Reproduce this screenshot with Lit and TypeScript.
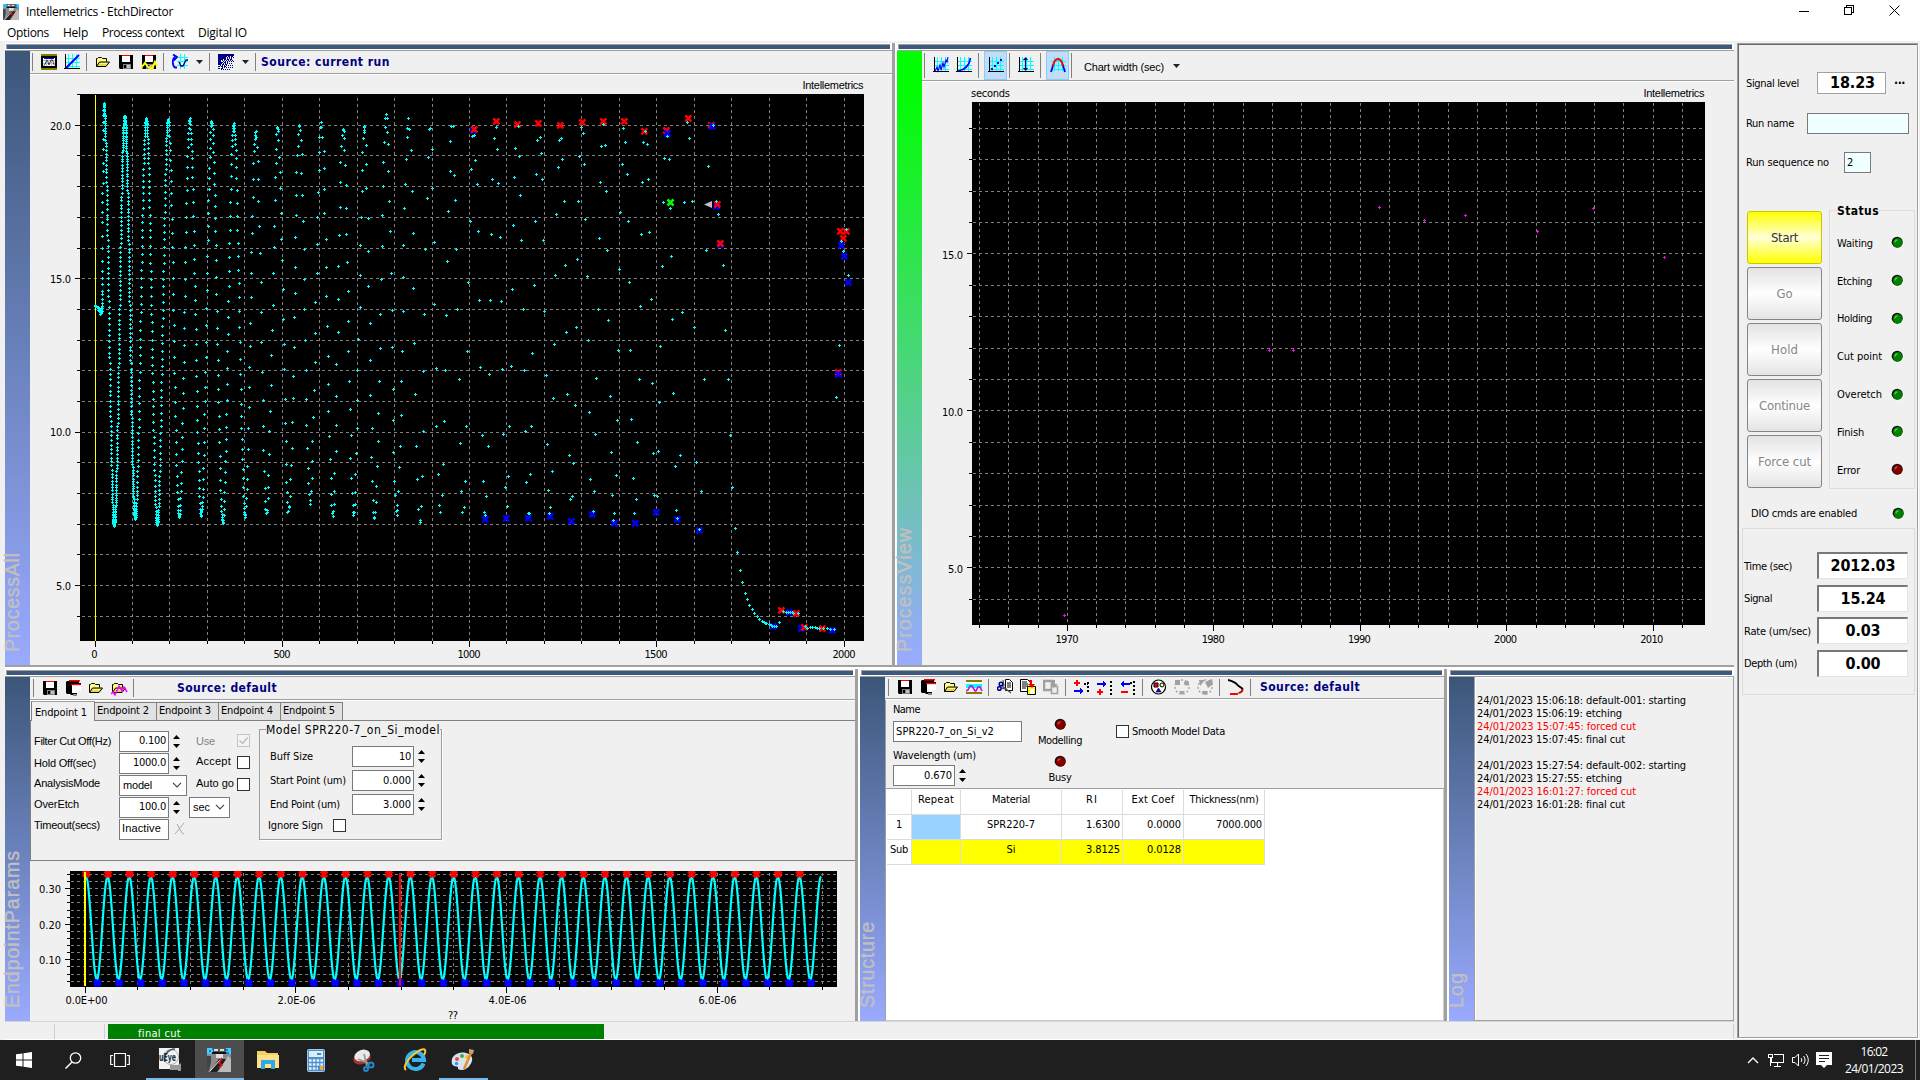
import { LitElement, html, svg, css } from "lit";
import { customElement } from "lit/decorators.js";

/* ---------- helpers ---------- */
const t = (s: string, w: number, cls = "") => html`<span class="t ${cls}" data-w=${w}>${s}</span>`;

const plus = (pts: number[][]) =>
  pts.map(([x, y]) => `M${Math.floor(x) - 1} ${Math.floor(y) + 0.5}h3M${Math.floor(x) + 0.5} ${Math.floor(y) - 1}v3`).join("");
const cross = (pts: number[][], r = 3) =>
  pts.map(([x, y]) => `M${x - r} ${y - r}l${2 * r} ${2 * r}m0 ${-2 * r}l${-2 * r} ${2 * r}`).join("");
/* coordinates stored in thirds of a pixel, relative to an origin */
const thirds = (a: number[], ox: number, oy: number) => {
  const r: number[][] = [];
  for (let i = 0; i < a.length; i += 2) r.push([ox + a[i] / 3, oy + a[i + 1] / 3]);
  return r;
};

/* ---------- signal trace ---------- */
const peaks = [[104, 104], [125, 117], [146.5, 119], [168.5, 120], [190, 120], [212, 123], [234, 123], [256, 132], [278, 125], [300, 126], [321.5, 124], [343, 129], [364.5, 128], [386.5, 117], [408.5, 118], [430, 125], [452.5, 126]];
const dips = [[114.5, 526], [135.5, 519], [157.5, 525], [179.5, 517], [201.5, 515], [223, 523], [245.5, 515], [267, 513], [289, 512], [310.5, 502], [333, 514], [354, 515], [375, 519], [397, 515], [420, 521], [440.5, 517]];
const fall = [0.09, 0.075, 0.15, 0.28, 0.28, 0.28, 0.28, 0.55, 0.5, 0.55, 0.55, 0.55, 0.62, 0.66, 1, 1.1];
const rise = [0.08, 0.15, 0.14, 0.28, 0.28, 0.28, 0.4, 0.5, 0.5, 0.55, 0.55, 0.55, 0.62, 0.66, 1, 1.1];
const trace: number[][] = [];
for (let i = 0; i < 14; i++) trace.push([95 + i * 0.3, 305.5 + i * 0.22]);
for (const [x, y] of [[98, 308], [98, 310], [99, 309], [99, 311], [100, 310], [100, 312], [100, 314], [101, 312], [101, 313], [101, 308], [102, 311], [102, 308]]) trace.push([x, y]);
for (const y of [306, 303, 299, 294, 291, 284, 278, 271, 261, 248, 236, 222, 212, 202, 193, 183, 171, 163, 149, 139, 130, 122, 115, 110]) trace.push([102.3 + (303 - y) / 160, y]);
for (let k = 0; k < dips.length; k++) {
  const seg = [[peaks[k], dips[k], fall[k]], [dips[k], peaks[k + 1], rise[k]]] as [number[], number[], number][];
  for (const [a, b, s] of seg) {
    for (let x = a[0] + ((k * 0.37) % 1) * s; x < b[0]; x += s) {
      if (x > 450) break;
      const f = (1 - Math.cos((Math.PI * (x - a[0])) / (b[0] - a[0]))) / 2;
      const n = k > 3 ? Math.sin(x * 91.7) * 2.5 : 0.4 * Math.sin(x * 50);
      trace.push([x + (k > 6 ? Math.sin(x * 37) * 0.5 : 0), a[1] + (b[1] - a[1]) * f + n]);
    }
  }
}
const upper = thirds([
  4,379,10,379,1,424,67,409,73,406,76,481,64,508,13,526,82,553,16,601,61,664,85,694,19,748,55,847,88,901,121,901,154,904,22,928,
  139,382,133,415,142,448,127,538,145,550,124,703,151,712,196,445,208,469,193,532,211,586,190,676,214,721,187,868,220,928,204,379,
  271,412,262,421,274,460,259,523,277,538,256,664,280,721,253,856,283,934,334,415,328,421,337,478,325,502,343,604,319,643,346,796,316,826,349,997,
  394,382,400,400,388,469,403,493,385,604,406,658,382,778,412,829,379,982,415,1020,460,373,454,439,466,436,451,547,469,574,448,715,472,751,445,928,475,961,
  520,385,526,427,517,493,532,523,511,637,535,664,508,808,538,847,586,394,580,427,592,433,595,538,577,547,598,697,574,703,604,898,571,919,
  652,409,643,475,658,478,640,607,661,625,664,769,637,799,667,958,697,937,733,982,712,367,718,415,703,607,727,604,769,751,790,376,775,499,799,604,805,643,820,796,826,991,
  1189,688,1174,724,1180,754,1195,826], 450, 0);
const lower = thirds([
  52,34,28,118,49,259,31,310,46,424,34,454,43,502,37,517,91,82,118,103,97,286,115,319,100,424,109,469,103,517,106,526,157,88,184,79,178,259,160,283,175,409,166,442,172,499,
  247,40,223,91,244,259,226,274,241,403,229,427,235,520,238,520,313,13,289,106,310,175,292,313,307,394,295,451,301,502,298,520,352,163,376,196,358,346,370,370,367,469,361,478,
  415,2,439,115,418,217,436,283,421,418,433,454,430,514,505,31,481,169,502,241,484,337,499,406,487,466,493,520,490,541,541,31,568,118,544,238,562,307,550,415,559,478,553,520,
  631,19,607,130,628,187,610,340,625,334,613,466,622,469,670,160,691,346,676,379,679,511,682,535,763,118,739,367,754,454,748,568,835,118,841,286,847,442,856,565,862,637,871,691,
  877,727,886,760,892,778,898,796,907,808,913,820,922,829,928,838,937,844,942,847,946,849,950,851,957,853,963,856,968,859,973,859,979,859,988,847,1000,814,1009,817,1015,818,1021,818,1026,818,1031,820,1045,820,
  1066,860,1072,865,1080,862,1087,862,1096,862,1102,865,1108,865,1120,866,1132,865,1142,868,1153,868,1168,16,1159,172], 450, 340);
const redA = thirds([73,388,139,364,202,374,265,370,331,376,397,367,460,364,523,364,583,394,649,391,715,355,784,376,802,613,811,730,1171,694,1189,694,1180,715], 450, 0);
const redB = thirds([1165,97,994,811,1039,820,1063,862,1117,866], 450, 340);
const blueUnder = thirds([70,391,799,619,811,734], 450, 0).concat(thirds([1018,817,970,859,1054,865], 450, 340));
const blueOver = thirds([652,400,787,379,1174,736,1183,769,1195,847], 450, 0).concat(
  thirds([106,538,169,535,235,535,301,529,364,544,427,523,493,550,556,550,619,517,682,538,748,571,1165,103,1147,871], 450, 340));

const gridPath = (xs: number[], ys: number[], x0: number, x1: number, y0: number, y1: number) =>
  xs.map(x => `M${x} ${y0}V${y1}`).join("") + ys.map(y => `M${x0} ${y}H${x1}`).join("");
const rng = (n: number, f: (i: number) => number) => Array.from({ length: n }, (_, i) => Math.floor(f(i)) + 0.5);

const label = (x: number, y: number, s: string, w: number, anchor = "end") =>
  svg`<text x=${x} y=${y} text-anchor=${anchor} textLength=${w} lengthAdjust="spacing">${s}</text>`;

function chartAll() {
  const xs = rng(20, i => 132.45 + i * 37.45);
  const ys = rng(17, i => 125.3 + i * 30.68);
  const major = (i: number) => i % 5 === 0;
  return html`<svg class="chart" width="862" height="590" viewBox="30 75 862 590">
    <text x="863.5" y="89" text-anchor="end" class="ms" textLength="61">Intellemetrics</text>
    <rect x="80" y="94" width="784" height="547" fill="#000"/>
    <g class="cr">
      <path class="grid" d=${gridPath(xs, ys, 82, 864, 98, 641)}/>
      <path class="tick" d=${"M77 94.5h3" + ys.map((y, i) => (major(i) ? `M75 ${y}h5` : `M77 ${y}h3`)).join("") + "M95.5 641v6" + xs.map((x, i) => `M${x} 641v${(i + 1) % 5 ? 3 : 6}`).join("")}/>
      <path d="M95.5 95V641" stroke="#ff0"/>
    </g>
    <path d=${cross(blueUnder)} stroke="#00f" stroke-width="2.5"/>
    <path d=${cross(redA.concat(redB))} stroke="#f00" stroke-width="2.5"/>
    <path d=${cross(blueOver)} stroke="#00f" stroke-width="2.5"/>
    <path d=${cross([[670.5, 202.5]])} stroke="#0f0" stroke-width="2.5"/>
    <path d="M704 204.5l8-3.5v7z" fill="#c0c0c0"/>
    <path class="cr" d=${plus(trace.concat(upper, lower))} stroke="#0ff"/>
    ${label(71, 130, "20.0", 21)}${label(71, 283, "15.0", 21)}${label(71, 436, "10.0", 21)}${label(71, 590, "5.0", 15)}
    ${label(94.5, 658, "0", 6, "middle")}${label(282, 658, "500", 17, "middle")}${label(469, 658, "1000", 23, "middle")}${label(656, 658, "1500", 23, "middle")}${label(844, 658, "2000", 23, "middle")}
  </svg>`;
}

function chartView() {
  const xs = rng(25, i => 979.5 + i * 29.29);
  const ys = rng(16, i => 128.3 + i * 31.4);
  const pts = [[1064, 615], [1269, 350], [1293, 350], [1379, 207], [1424, 220], [1465, 215], [1537, 231], [1593, 208], [1664, 257]];
  return html`<svg class="chart" width="812" height="583" viewBox="922 82 812 583">
    <text x="971" y="97" textLength="39">seconds</text>
    <text x="1704.5" y="97" text-anchor="end" class="ms" textLength="61">Intellemetrics</text>
    <rect x="972" y="102" width="733" height="523" fill="#000"/>
    <g class="cr">
      <path class="grid" d=${gridPath(xs, ys, 973, 1703, 103, 625)}/>
      <path class="tick" d=${ys.map((y, i) => (i % 5 === 4 ? `M967 ${y}h5` : `M969 ${y}h3`)).join("") + xs.map((x, i) => `M${x} 625v${i % 5 === 3 ? 6 : 3}`).join("")}/>
      <path d=${plus(pts)} stroke="#f0f"/>
    </g>
    ${label(963, 259, "15.0", 21)}${label(963, 416, "10.0", 21)}${label(963, 573, "5.0", 15)}
    ${[1970, 1980, 1990, 2000, 2010].map((v, i) => label(1067 + i * 146.2, 643, String(v), 23, "middle"))}
  </svg>`;
}

function chartModel() {
  const xs = rng(14, i => 137.9 + i * 52.65);
  const ys = rng(16, i => 874.4 + i * 7.12);
  let d = "";
  for (let x = 86; x <= 821.2; x += 0.5) {
    const c = Math.cos(((x - 86) / 21.62) * 2 * Math.PI);
    d += `${d ? "L" : "M"}${x} ${(928 - 51.5 * c).toFixed(1)}`;
  }
  const reds = Array.from({ length: 34 }, (_, k) => [86.3 + k * 21.62, 874]);
  const blues = Array.from({ length: 34 }, (_, k) => [97.5 + k * 21.62, 983]);
  return html`<svg class="chart" width="825" height="160" viewBox="30 861 825 160">
    <defs><clipPath id="c"><rect x="70" y="871" width="767" height="116"/></clipPath></defs>
    <rect x="70" y="871" width="767" height="116" fill="#000"/>
    <g class="cr">
      <path class="grid" d=${gridPath(xs, ys, 71, 837, 873, 987)}/>
      <path class="tick" d=${ys.map((y, i) => (i % 5 === 2 ? `M65 ${y}h5` : `M67 ${y}h3`)).join("") + "M85.5 987v6" + xs.map((x, i) => `M${x} 987v${i % 4 === 3 ? 6 : 3}`).join("")}/>
    </g>
    <g clip-path="url(#c)">
      <path d=${d} stroke="#0ff" stroke-width="2.2" fill="none"/>
      <path d=${cross(reds)} stroke="#f00" stroke-width="4"/>
      <path d=${cross(blues)} stroke="#00f" stroke-width="4"/>
      <rect x="84" y="872" width="2" height="114" fill="#ff0"/>
      <rect x="399" y="873" width="2" height="113" fill="#f00"/>
    </g>
    ${label(61, 893, "0.30", 22)}${label(61, 929, "0.20", 22)}${label(61, 964, "0.10", 22)}
    ${label(86.5, 1004, "0.0E+00", 42, "middle")}${label(296.5, 1004, "2.0E-06", 38, "middle")}${label(507.5, 1004, "4.0E-06", 38, "middle")}${label(717.5, 1004, "6.0E-06", 38, "middle")}
    ${label(453, 1018.5, "??", 10, "middle")}
  </svg>`;
}

/* ---------- icons (16 x 16) ---------- */
const icon = (body: unknown) => html`<svg class="ico" width="17" height="17" viewBox="0 0 17 17">${body}</svg>`;
const cg = svg`<path class="cr" d="M1 4.5h15M1 8.5h15M1 12.5h15M4.5 0v14M8.5 0v14M12.5 0v14" stroke="#0ff"/>`;
const axes = svg`<path class="cr" d="M1.5 0v15M0 14.5h16" stroke="#000"/>`;
const floppyBody = svg`<path d="M1 1h14v14H2l-1-1z" fill="#000"/><path d="M4 1h8v7H4z" fill="#fff"/><path d="M4 1h8v1H4z" fill="#f00"/><path d="M5 10h8v5H5z" fill="#808080"/><path d="M6 11h2v3H6z" fill="#000"/><path d="M9 11h3v3H9z" fill="#c0c0c0"/>`;
const folderBody = svg`<path d="M1.5 12.5v-8h1l1-1h3l1 1h4v3" fill="#ffff80" stroke="#000"/><path d="M1.5 12.5l3-4.5h10l-3.500 4.500z" fill="#e8d840" stroke="#000"/><path d="M5 9.500h7" stroke="#fff8a0"/>`;
const I = {
  scope: icon(svg`<g class="cr"><path d="M0 0h16v2H0zM0 14h16v2H0z" fill="#808000"/><path d="M1 3h14v10H1z" fill="#fff" stroke="#000" stroke-width="2"/><path d="M3 4.500h10" stroke="#00f" stroke-width="1"/><path d="M2 6.500h12M2 9.500h12M5.500 5v7M10.500 5v7" stroke="#4ef"/></g><path d="M2.500 11.500l1.500-1 1.500-4h1L8 11l2-5h1.500L13 10.500l1 1" stroke="#b00" fill="none"/>`),
  line: icon(svg`${cg}${axes}<path d="M2 14L15 1" stroke="#00f" stroke-width="2"/>`),
  folder: icon(folderBody),
  floppy: icon(floppyBody),
  floppyWave: icon(svg`${floppyBody}<path d="M0 14l4-5 3 4 4 2 3-7 2 4" fill="none" stroke="#ff0" stroke-width="2"/>`),
  floppies: icon(svg`<path d="M2 1h12v2H5v11H2l-1-1V2z" fill="#000"/><path d="M4 0h11v1.500H4z" fill="#f00"/><path d="M4 3h12v12H6l-2-2z" fill="#000"/><path d="M7 5h9v8H7z" fill="#fff"/><path d="M6 4h10v1.200H6z" fill="#f00"/><path d="M12 11h5v5h-5z" fill="#f0f0f0"/><path d="M8 14h4v2H8z" fill="#888"/>`),
  folderWave: icon(svg`${folderBody}<path d="M0 14l2-2 2 3 4-9 3 5 2-4 3 5" fill="none" stroke="#f0f" stroke-width="1.500"/>`),
  refresh: icon(svg`<path class="cr" d="M5 3.500h11M5 7.500h11M5 11.500h11M8.500 0v15M12.500 0v15" stroke="#0ff"/><path d="M5 13.500H3c-3-2-3-9 0-10.500M1 .5l4 2.500-3 3.500" stroke="#00f" stroke-width="1.800" fill="none"/><path d="M7 8l2 4 2 0 3-6 2 0" stroke="#000080" stroke-width="1.300" fill="none"/>`),
  dither: icon(svg`<g class="cr"><path d="M0 0h16v2H0zM0 0h8v5H0zM0 0h3v11H0z" fill="#000080"/><path d="M1 2.500h14M0 5.500h14M0 8.500h10M1 10.500h9M0 12.500h8M0 14.500h6" stroke="#000080" stroke-dasharray="2 1"/><path d="M9 3.500h7M5 4.500h10M4 6.500h11M5 7.500h11M3 9.500h12M4 13.500h11M2 11.500h13M3 15.500h9" stroke="#000080" stroke-dasharray="1 1"/></g>`),
  noisy: icon(svg`${cg}${axes}<path d="M2 14l2-4 1 4 2-6 1 5 2-7 1 4 2-7 1 2 1-5" stroke="#00f" fill="none" stroke-width="1.100"/>`),
  curve: icon(svg`${cg}${axes}<path d="M2 14c6-1 11-4 12.500-13" stroke="#00f" fill="none" stroke-width="1.600"/>`),
  dots: icon(svg`${cg}${axes}<path d="M3 11h2v2H3zM6 8h2v2H6zM9 5h2v2H9zM12 2h2v2h-2z" fill="#00f"/>`),
  height: icon(svg`${cg}${axes}<path d="M7.500 1v12M5.500 3L7.500 1 9.500 3M5.500 11L7.500 13l2-2" stroke="#000080" fill="none" stroke-width="1.200"/>`),
  arch: icon(svg`${cg}<path d="M1 15l2.500-8M15 15l-2.500-8" stroke="#00f" stroke-width="1.800"/><path d="M3 9c1-5 3-7 5-7s4 2 5 7" stroke="#f00" fill="none" stroke-width="2"/>`),
  layers: icon(svg`<g class="cr"><path d="M0 1h16v2H0z" fill="#808000"/><path d="M0 3h16v2H0z" fill="#fff"/><path d="M0 5h16v4H0z" fill="#0ff"/><path d="M0 13h16v2H0z" fill="#808000"/></g><path d="M0 12l2-1 2-4h2l3 5h1l2-4h2l2 4" stroke="#d0d" fill="none" stroke-width="1.600"/>`),
  cut: icon(svg`<path d="M8.500.5h4l3 3v8h-7z" fill="#fff" stroke="#000"/><path d="M10 4h4M10 6h4M10 8h4" stroke="#000"/><path d="M4 6l5 4 5 4M4 9l6 1M6 1l1 6" stroke="#555" stroke-width="1.300"/><circle cx="4" cy="5" r="1.800" fill="none" stroke="#000090" stroke-width="1.500"/><circle cx="2.300" cy="9.500" r="1.800" fill="none" stroke="#000090" stroke-width="1.500"/>`),
  paste: icon(svg`<path d="M.5.5h7l3 3v9H.5z" fill="#fff" stroke="#000"/><path d="M2 3h5M2 5h6M2 7h6M2 9h4" stroke="#000"/><path d="M7.500 7.500h8v8h-8z" fill="#ff0" stroke="#000"/><path d="M10 10h4v5h-4z" fill="#fff"/><path d="M9 1h3v4h3l-3 4-4-4h2z" fill="#e00"/>`),
  pasteOff: icon(svg`<path d="M1 2h8v9H1z" fill="none" stroke="#a0a0a0" stroke-width="2.500"/><path d="M8.500 7.500h6v7h-6z" fill="#eee" stroke="#a0a0a0" stroke-width="1.500"/><path d="M10 1h2v4h3l-4 4-4-4h3z" fill="#a0a0a0"/>`),
  addR: icon(svg`<g class="cr"><path d="M0 4h6M3 1v6" stroke="#f00" stroke-width="2"/><path d="M0 12h9" stroke="#00f" stroke-width="2"/><path d="M6 9l4 3-4 3z" fill="#00f"/><path d="M10 5h4" stroke="#000" stroke-width="2" stroke-dasharray="2 1"/><path d="M14 3v12" stroke="#000" stroke-width="2" stroke-dasharray="2 2"/></g>`),
  addB: icon(svg`<g class="cr"><path d="M0 5h9" stroke="#00f" stroke-width="2"/><path d="M6 2l4 3-4 3z" fill="#00f"/><path d="M0 13h6M3 10v6" stroke="#f00" stroke-width="2"/><path d="M14 2v14" stroke="#000" stroke-width="2" stroke-dasharray="2 2"/></g>`),
  del: icon(svg`<g class="cr"><path d="M2 5h8" stroke="#00f" stroke-width="2"/><path d="M4 2L0 5l4 3z" fill="#00f"/><path d="M1 13h7" stroke="#f00" stroke-width="2"/><path d="M14 2v14M10 4h3" stroke="#000" stroke-width="2" stroke-dasharray="2 2"/></g>`),
  shapes: icon(svg`<circle cx="7.500" cy="8" r="7" fill="#fff" stroke="#000" stroke-width="1.200"/><path d="M3 4h4v4H3z" fill="#f00" stroke="#000"/><circle cx="11" cy="6" r="2" fill="#ff8" stroke="#000"/><path d="M5 13l2.500-4 2.500 4z" fill="#00f" stroke="#000" stroke-width=".6"/>`),
  shapesOff: icon(svg`<circle cx="8" cy="8" r="7" fill="none" stroke="#a0a0a0" stroke-width="1.300" stroke-dasharray="2 2"/><path d="M1 1h5v5H1zM5 12h6l-3 4z" fill="#a0a0a0"/><circle cx="12.500" cy="4" r="2.500" fill="#a0a0a0"/>`),
  shapesOff2: icon(svg`<circle cx="8" cy="8" r="7" fill="none" stroke="#a0a0a0" stroke-width="1.300" stroke-dasharray="2 2"/><path d="M2 1h6L3 7zM8 3l7-3 1 5-5 4zM5 12h6l-2 4-3-1z" fill="#a0a0a0"/>`),
  hook: icon(svg`<path d="M0 1c5 1 8 3 10 5.500L15 10" stroke="#000" fill="none" stroke-width="1.800"/><path d="M14.500 10c0 2-1 3.500-4 4" stroke="#c00" fill="none" stroke-width="2"/><path d="M2 15h8" stroke="#f00" stroke-width="2"/>`),
};
const etch = (s: number) => html`<svg width=${s} height=${s} viewBox="0 0 24 24"><path d="M0 0h24v24H0z" fill="#8a8a8a"/><path d="M0 0h24v6H0z" fill="#4cf"/><path d="M2 3h2M5 1h2M18 2h3M19 5h3" stroke="#06c" stroke-width="1.500"/><path d="M0 24V8h4v6l-2 9z" fill="#444"/><path d="M3 24l9-13h8L10 24z" fill="#222"/><path d="M21 8l3 3v13H11z" fill="#bbb"/><path d="M6 0h13v4H6z" fill="#555"/><path d="M7 1h4v2H7zM13 1h4v2h-4zM9 5h7v5H9z" fill="#ddd"/><path d="M5 4h14v2H5z" fill="#111"/><path d="M3 23L14 11" stroke="#eee"/><path d="M15 10l-3 5 3 2-3 3" stroke="#e11" stroke-width="1.500" fill="none"/></svg>`;
const led = (c = "g") => html`<svg class="led" width="13" height="13" viewBox="0 0 13 13"><circle cx="7" cy="7" r="5.500" fill="#fff"/><circle cx="6.200" cy="6.200" r="5.500" fill="#111"/><circle cx="6.800" cy="6.800" r="4.800" fill=${c === "g" ? "#008000" : "#800000"}/><path d="M4 6.500c0-1.500 1-2.500 2.500-2.500" stroke=${c === "g" ? "#3fd03f" : "#f03030"} stroke-width="1.300" fill="none"/></svg>`;
const spin = html`<svg class="spin" width="9" height="15" viewBox="0 0 9 15"><path d="M1 5l3.500-4L8 5zM1 10h7l-3.500 4z" fill="#000"/></svg>`;
const chev = html`<svg width="10" height="6" viewBox="0 0 10 6"><path d="M1 .8l4 4 4-4" fill="none" stroke="#444" stroke-width="1.200"/></svg>`;
const sep = html`<i class="sep"></i>`;
const btn = (i: unknown, on = false) => html`<span class="btn ${on ? "on" : ""}">${i}</span>`;
const drop = html`<svg class="drop" width="15" height="8" viewBox="0 0 15 8"><path d="M6 2h7L9.500 6z" fill="#222"/></svg>`;

const strip = (cls: string, name: string, len: number, h: number) => html`<svg class="strip ${cls}" width="25" height=${h} viewBox="0 0 25 ${h}">
  <text transform="translate(14 ${h - 13}) rotate(-90)" textLength=${len}>${name}</text></svg>`;
const head = html`<div class="head"><div class="hb"></div></div>`;

@customElement("app-root")
export class AppRoot extends LitElement {
  static styles = css`
    :host { display: block; width: 1920px; height: 1080px; overflow: hidden; background: #f0f0f0; color: #000;
      font: 11px/13px "DejaVu Sans Condensed", "DejaVu Sans", sans-serif; }
    * { box-sizing: border-box; }
    svg { display: block; flex: none; }
    text { font-size: 11px; font-family: "DejaVu Sans Condensed", "DejaVu Sans", sans-serif; }
    .strip { overflow: visible; }
    .strip text { font-family: "Liberation Sans", Arial, sans-serif; font-size: 19.500px; fill: #c0c0c0; stroke: #c0c0c0; stroke-width: .4px; }
    .t { white-space: nowrap; display: inline-block; flex: none; justify-self: start; }
    .ms, text.ms { font-family: "Liberation Sans", Arial, sans-serif; font-size: 11px; }
    .seg { font-family: "Open Sans", "Noto Sans", sans-serif; font-size: 12px; line-height: 16px; }
    .cr { shape-rendering: crispEdges; }
    .grid { stroke: #808080; stroke-dasharray: 3 3; fill: none; }
    .tick { stroke: #000; fill: none; }
    .chart { fill: none; }
    .chart text { fill: #000; }
    .root { display: grid; grid-template-rows: 41px 999px 40px; width: 1920px; height: 1080px; }
    .top { background: #fff; display: grid; grid-template-rows: 24px 17px; }
    .title { display: flex; align-items: center; padding: 0 20px 0 3px; }
    .title .t { margin-left: 7px; }
    .wb { display: flex; margin-left: auto; gap: 35px; align-items: center; margin-top: -4px; }
    .menu { display: flex; align-items: center; padding-left: 7px; gap: 14px; }
    .body { display: flex; padding-top: 2px; }
    .left { width: 1737px; padding-left: 5px; display: flex; flex-direction: column; flex: none; }
    .rowa { display: flex; height: 622px; }
    .rowb { display: flex; height: 352px; }
    .vd { width: 5px; flex: none; border-left: 3px solid #a0a0a0; background: #fff; }
    .hd { height: 4px; border-top: 2px solid #a0a0a0; background: #fff; width: 1729px; flex: none; }
    .panel { display: flex; flex-direction: column; flex: none; }
    .p1 { width: 887px; } .p2 { width: 837px; } .p3 { width: 850px; } .p4 { width: 584px; } .p5 { width: 285px; }
    .head { height: 8px; flex: none; background: #fff; border-bottom: 1px solid #a0a0a0; padding: 1px 2px 1px 1px; }
    .hb { height: 5px; background: #3f597e; border: 1px solid #a0a0a0; border-width: 1px 0 0 1px; }
    .pb { display: flex; flex: 1; min-height: 0; }
    .sa { background: linear-gradient(#3c5679, #6a82bc 50%, #9aaaff); }
    .sg { background: linear-gradient(#0f0, #0f0 5%, #9aaaff); }
    .pc { flex: 1; min-width: 0; display: flex; flex-direction: column; }
    .tb { display: flex; align-items: stretch; border-bottom: 1px solid #a0a0a0; box-shadow: 0 1px #fff; margin-bottom: 1px; flex: none; }
    .tb1 { height: 23px; } .tb2 { height: 30px; } .tb3 { height: 23px; } .tb4 { height: 22px; }
    .sep { width: 8px; flex: none; display: flex; padding: 2px 0 2px 4px; }
    .tb1 .sep:first-child, .tb2 .sep:first-child { width: 6px; padding-left: 2px; }
    .tb3 .sep:first-child { width: 7px; padding-left: 3px; }
    .tb4 .sep:first-child { width: 7px; padding-left: 3px; }
    .sep::after { content: ""; width: 1px; background: #808080; }
    .btn { width: 23px; flex: none; display: flex; align-items: center; padding-left: 5px; }
    .on { background: #bfddf5; border: 1px solid #90c8f6; margin: 0 -2px 0 2px; padding-left: 3px; }
    .drop { align-self: center; }
    .src { font-family: "DejaVu Sans", sans-serif; font-stretch: condensed; font-weight: bold; font-size: 12px; color: #000080; align-self: center; }
    .tb1 .src { margin-left: 2px; } .tb3 .src { margin-left: 40px; } .tb4 .src { margin-left: 6px; }
    .cw { align-self: center; margin: 3px 0 0 9px; }
    .tb2 .drop { margin-left: 3px; }
    .tabs { display: flex; height: 19px; padding-left: 1px; align-items: flex-end; flex: none; }
    .tab { width: 62px; height: 18px; background: #e1e1e1; border: 1px solid #808080; border-width: 1px 1px 0 0; padding: 1px 0 0 2px; }
    .tab.act { width: 64px; height: 20px; margin-bottom: -1px; background: #f0f0f0; border-width: 1px 1px 0 1px; padding: 4px 0 0 3px; border-top-color: #a0a0a0; z-index: 1; }
    .pane { height: 141px; border: 1px solid #808080; border-right: 0; display: flex; padding-top: 8px; flex: none; }
    .form { display: grid; grid-template-columns: 88px 50px 20px 48px 13px; grid-auto-rows: 22px; align-items: center; padding-top: 1px; height: 112px; }
    .form > .t { margin-left: 3px; } .form > .c4 { margin-left: 7px; }
    .form > .u1 { margin-bottom: 3px; } .form > .u2 { margin-bottom: 5px; } .form > .u3 { margin-bottom: 7px; }
    .in { height: 21px; background: #fff; border: 1px solid #7a7a7a; display: flex; align-items: center; padding: 0 2px 1px; justify-content: flex-end; }
    .in.l { justify-content: flex-start; }
    .combo { justify-content: space-between; padding: 0 4px 0 3px; }
    .cm { grid-column: span 2; width: 68px; } .cs { width: 41px; padding-right: 4px; }
    .form .spin, .gb .spin, .wl .spin { margin-left: 3px; }
    .cb { width: 13px; height: 13px; border: 1px solid #333; background: #fff; flex: none; }
    .form .cb { margin-bottom: 1px; }
    .cb.off { border-color: #c4c4c4; background: #f4f4f4; }
    .dim { color: #838383; }
    .gb { position: relative; width: 183px; height: 111px; margin: 0 0 0 9px; border: 1px solid #a0a0a0; box-shadow: 1px 1px #fff; padding: 15px 0 0 8px; display: grid; grid-template-columns: 84px 62px 20px; grid-template-rows: 24px 24px 24px 18px; align-items: center; }
    .gb > .t { margin: 0 0 1px 2px; }
    .gb .in, .gb .spin { margin-bottom: 1px; }
    .gt { position: absolute; left: 6px; top: -7px; background: #f0f0f0; font-size: 12px; line-height: 15px; }
    .ign { grid-column: span 3; display: flex; align-items: center; gap: 10px; margin-bottom: 2px; }
    .f4 { height: 88px; display: flex; border-left: 1px solid #a0a0a0; padding: 3px 0 0 7px; flex: none; }
    .fa { width: 129px; display: flex; flex-direction: column; }
    .fa .la { height: 18px; } .fa .lb { height: 15px; margin: 7px 0 1px; }
    .wl { display: flex; align-items: center; } .wl .in { width: 62px; }
    .fb { width: 76px; display: flex; flex-direction: column; align-items: center; padding-top: 15px; }
    .fb .t { margin: 3px 0 8px; }
    .fc { display: flex; align-items: center; gap: 3px; height: 13px; margin: 22px 0 0 18px; }
    .tbl { flex: 1; background: #fff; border: 1px solid #a0a0a0; border-right-color: #ccc; border-bottom-color: #ccc; padding: 1px 0 0 1px; display: grid; grid-template-columns: 25px 49px 101px 61px 61px 81px; grid-auto-rows: 25px; align-content: start; }
    .cell { border-right: 1px solid #dcdcdc; border-bottom: 1px solid #dcdcdc; display: flex; justify-content: center; padding: 3px 2px 0; }
    .cell.n { justify-content: flex-end; }
    .y { background: #ff0; } .b { background: #99d1ff; }
    .log { flex: 1; border: 1px solid #a0a0a0; border-width: 0 1px 1px 1px; box-shadow: inset 1px 1px #fff; padding: 17px 0 0 2px; display: flex; flex-direction: column; }
    .log .t, .log i { height: 13px; align-self: flex-start; }
    .red { color: #f00; }
    .status { height: 19px; border-top: 1px solid #d5d5d5; border-bottom: 1px solid #fff; display: flex; padding-top: 2px; width: 1729px; flex: none; }
    .status i { border-right: 1px solid #d0d0d0; }
    .s1 { width: 50px; } .s2 { width: 50px; } .s3 { margin-left: 3px; width: 496px; background: #008000; color: #fff; padding: 3px 0 0 30px; }
    .s4 { flex: 1; }
    .side { width: 181px; height: 995px; border: 1px solid #a0a0a0; box-shadow: inset 1px 1px #696969, 1px 1px #fff; padding: 28px 2px 0 4px; display: flex; flex-direction: column; }
    .line { display: flex; align-items: center; padding-left: 4px; }
    .l1 { height: 22px; } .l2 { height: 21px; margin-top: 19px; } .l3 { height: 21px; margin-top: 18px; }
    .sig { width: 69px; height: 22px; background: #fff; border: 1px solid #a0a0a0; margin-left: 18px; display: flex; justify-content: center; align-items: center; padding: 0 0 0 2px; }
    .big { font-family: "DejaVu Sans", sans-serif; font-weight: bold; font-size: 16px; line-height: 18px; font-stretch: condensed; }
    .dot3 { margin-left: 8px; font-weight: bold; font-size: 12px; margin-top: -6px; }
    .az { background: #f0ffff; } .rn { width: 102px; margin-left: 13px; } .rs { width: 27px; margin-left: 15px; }
    .mid { display: flex; margin-top: 37px; height: 279px; }
    .bts { display: flex; flex-direction: column; gap: 3px; padding: 1px 0 0 5px; }
    .bt { width: 75px; height: 53px; border: 1px solid #868686; border-radius: 3px; background: linear-gradient(#e2e2e2, #fff 50%, #e4e4e4); color: #868686; font-size: 13px; line-height: 16px; display: flex; align-items: center; justify-content: center; }
    .bt.st { background: linear-gradient(#ff0, #ffffd8 50%, #ff0); border-color: #c8c800; color: #333; }
    .sg2 { position: relative; margin-left: 7px; width: 86px; border: 1px solid #dcdcdc; padding: 13px 10px 0 7px; display: grid; grid-auto-rows: 37.800px; }
    .sg2 b { position: absolute; left: 7px; top: -7px; background: #f0f0f0; font-size: 12px; line-height: 15px; }
    .sr { display: flex; justify-content: space-between; align-items: center; }
    .sr .t { margin-top: 1px; }
    .dio { display: flex; justify-content: space-between; align-items: center; padding: 9px 10px 0 9px; height: 39px; }
    .vals { border: 1px solid #dcdcdc; width: 173px; height: 167px; padding: 23px 0 0 1px; display: flex; flex-direction: column; gap: 5.500px; }
    .v { display: grid; grid-template-columns: 73px 91px; align-items: center; height: 27px; }
    .v > .t { margin-top: 1px; }
    .v div { height: 27px; background: #fff; border: 1px solid #e3e3e3; border-top: 2px solid #787878; border-left: 2px solid #787878; display: flex; justify-content: center; align-items: center; }
    .task { background: #1f1f1f; display: flex; align-items: stretch; color: #fff; padding-right: 3px; }
    .ti { width: 48.800px; display: flex; align-items: center; justify-content: center; flex: none; border-bottom: 2px solid transparent; padding-top: 2px; }
    .ti.v3 { padding-right: 3px; }
    .run { border-bottom-color: #76b9ed; padding-right: 2px; }
    .ti.cur { background: #4d4d4d; border-bottom-color: #76b9ed; padding-right: 1px; }
    .tray { margin-left: auto; display: flex; align-items: center; gap: 7px; margin-right: 1px; }
    .up { margin-right: 2px; }
    .clk { display: flex; flex-direction: column; align-items: center; width: 72px; margin: -1px 0 0 -1px; }
    .clk .t { line-height: 17px; }
    .edge { width: 1px; height: 40px; background: #777; margin-left: -2px; }
  `;

  firstUpdated() {
    this.renderRoot.querySelectorAll<HTMLElement>(".t").forEach(el => {
      const want = Number(el.dataset.w);
      const n = (el.textContent || "").length;
      if (!want || !n) return;
      const have = el.getBoundingClientRect().width;
      el.style.letterSpacing = ((want - have) / n).toFixed(3) + "px";
    });
  }

  render() {
    const log: [string, number, boolean][] = [
      ["24/01/2023 15:06:18: default-001: starting", 209, false], ["24/01/2023 15:06:19: etching", 145, false],
      ["24/01/2023 15:07:45: forced cut", 159, true], ["24/01/2023 15:07:45: final cut", 148, false], ["", 0, false],
      ["24/01/2023 15:27:54: default-002: starting", 209, false], ["24/01/2023 15:27:55: etching", 145, false],
      ["24/01/2023 16:01:27: forced cut", 159, true], ["24/01/2023 16:01:28: final cut", 148, false]];
    const cell = (s: string, w: number, c = "") => html`<div class="cell ${c}">${s ? t(s, w) : ""}</div>`;
    return html`<div class="root">
      <div class="top">
        <div class="title">${etch(16)}${t("Intellemetrics - EtchDirector", 147, "seg")}
          <div class="wb">
            <svg width="10" height="11" viewBox="0 0 10 11"><path class="cr" d="M0 6.500h10" stroke="#000"/></svg>
            <svg width="10" height="11" viewBox="0 0 10 11"><path class="cr" d="M.5 2.500h7v7h-7zM2.500 2V.5h7v7H8" fill="none" stroke="#000"/></svg>
            <svg width="11" height="11" viewBox="0 0 11 11"><path d="M.5.5l10 10M10.500.5l-10 10" stroke="#000"/></svg>
          </div>
        </div>
        <div class="menu">${t("Options", 42, "seg")}${t("Help", 25, "seg")}${t("Process context", 82, "seg")}${t("Digital IO", 49, "seg")}</div>
      </div>
      <div class="body">
        <div class="left">
          <div class="rowa">
            <section class="panel p1">${head}
              <div class="pb">${strip("sa", "ProcessAll", 99, 614)}
                <div class="pc">
                  <div class="tb tb1">${sep}${btn(I.scope)}${btn(I.line)}${sep}${btn(I.folder)}${btn(I.floppy)}${btn(I.floppyWave)}${sep}${btn(I.refresh)}${drop}${sep}${btn(I.dither)}${drop}${sep}${t("Source: current run", 129, "src")}</div>
                  ${chartAll()}
                </div>
              </div>
            </section>
            <div class="vd"></div>
            <section class="panel p2">${head}
              <div class="pb">${strip("sg", "ProcessView", 124, 614)}
                <div class="pc">
                  <div class="tb tb2">${sep}${btn(I.noisy)}${btn(I.curve)}${sep}${btn(I.dots, true)}${sep}${btn(I.height)}${sep}${btn(I.arch, true)}${sep}${t("Chart width (sec)", 80, "cw ms")}${drop}</div>
                  ${chartView()}
                </div>
              </div>
            </section>
          </div>
          <div class="hd"></div>
          <div class="rowb">
            <section class="panel p3">${head}
              <div class="pb">${strip("sa", "EndpointParams", 157, 344)}
                <div class="pc">
                  <div class="tb tb3">${sep}${btn(I.floppy)}${btn(I.floppies)}${btn(I.folder)}${btn(I.folderWave)}${sep}${t("Source: default", 100, "src")}</div>
                  <div class="tabs">${[1, 2, 3, 4, 5].map(i => html`<div class="tab ${i === 1 ? "act" : ""}">${t("Endpoint " + i, 52)}</div>`)}</div>
                  <div class="pane">
                    <div class="form">
                      ${t("Filter Cut Off(Hz)", 77, "ms")}<div class="in">${t("0.100", 27)}</div>${spin}${t("Use", 19, "ms dim c4")}<span class="cb off"><svg width="11" height="11" viewBox="0 0 11 11"><path d="M1.500 5.500l3 3 5-6" stroke="#bbb" stroke-width="1.300" fill="none"/></svg></span>
                      ${t("Hold Off(sec)", 62, "ms")}<div class="in">${t("1000.0", 33)}</div>${spin}${t("Accept", 35, "ms c4 u1")}<span class="cb"></span>
                      ${t("AnalysisMode", 66, "ms u1")}<div class="in combo cm">${t("model", 29, "ms")}${chev}</div>${t("Auto go", 38, "ms c4 u1")}<span class="cb"></span>
                      ${t("OverEtch", 45, "ms u2")}<div class="in">${t("100.0", 27)}</div>${spin}<div class="in combo cs">${t("sec", 17, "ms")}${chev}</div><span></span>
                      ${t("Timeout(secs)", 66, "ms u3")}<div class="in l">${t("Inactive", 39, "ms")}</div><svg class="xx" width="18" height="14" viewBox="0 0 18 14"><path d="M8 2l5 9 2 1M15 1L6 12" stroke="#aaa" fill="none"/></svg>
                    </div>
                    <div class="gb"><span class="gt">${t("Model SPR220-7_on_Si_model", 174)}</span>
                      ${t("Buff Size", 43)}<div class="in">${t("10", 12)}</div>${spin}
                      ${t("Start Point (um)", 76)}<div class="in">${t("0.000", 28)}</div>${spin}
                      ${t("End Point (um)", 70)}<div class="in">${t("3.000", 28)}</div>${spin}
                      <div class="ign">${t("Ignore Sign", 55)}<span class="cb"></span></div>
                    </div>
                  </div>
                  ${chartModel()}
                </div>
              </div>
            </section>
            <div class="vd"></div>
            <section class="panel p4">${head}
              <div class="pb">${strip("sa", "Structure", 86, 344)}
                <div class="pc">
                  <div class="tb tb4">${sep}${btn(I.floppy)}${btn(I.floppies)}${btn(I.folder)}${btn(I.layers)}${sep}${btn(I.cut)}${btn(I.paste)}${btn(I.pasteOff)}${sep}${btn(I.addR)}${btn(I.addB)}${btn(I.del)}${sep}${btn(I.shapes)}${btn(I.shapesOff)}${btn(I.shapesOff2)}${sep}${btn(I.hook)}${sep}${t("Source: default", 100, "src")}</div>
                  <div class="f4">
                    <div class="fa"><div class="la">${t("Name", 27)}</div><div class="in l">${t("SPR220-7_on_Si_v2", 98)}</div>
                      <div class="lb">${t("Wavelength (um)", 83)}</div><div class="wl"><div class="in">${t("0.670", 28)}</div>${spin}</div></div>
                    <div class="fb">${led("r")}${t("Modelling", 44)}${led("r")}${t("Busy", 23)}</div>
                    <div class="fc"><span class="cb"></span>${t("Smooth Model Data", 93)}</div>
                  </div>
                  <div class="tbl">
                    ${cell("", 0)}${cell("Repeat", 36)}${cell("Material", 38)}${cell("RI", 12)}${cell("Ext Coef", 43)}${cell("Thickness(nm)", 69)}
                    ${cell("1", 6)}${cell("", 0, "b")}${cell("SPR220-7", 48)}${cell("1.6300", 34, "n")}${cell("0.0000", 34, "n")}${cell("7000.000", 46, "n")}
                    ${cell("Sub", 18)}${cell("", 0, "y")}${cell("Si", 9, "y")}${cell("3.8125", 34, "n y")}${cell("0.0128", 34, "n y")}${cell("", 0, "y")}
                  </div>
                </div>
              </div>
            </section>
            <div class="vd"></div>
            <section class="panel p5">${head}
              <div class="pb">${strip("sa", "Log", 35, 344)}
                <div class="log">${log.map(([s, w, r]) => (s ? t(s, w, r ? "red" : "") : html`<i></i>`))}</div>
              </div>
            </section>
          </div>
          <div class="status"><i class="s1"></i><i class="s2"></i><div class="s3">${t("final cut", 43)}</div><i class="s4"></i></div>
        </div>
        <aside class="side">
          <div class="line l1">${t("Signal level", 53)}<div class="sig">${t("18.23", 45, "big")}</div>${t("...", 11, "dot3")}</div>
          <div class="line l2">${t("Run name", 48)}<div class="in az rn"></div></div>
          <div class="line l3">${t("Run sequence no", 83)}<div class="in l az rs">${t("2", 6)}</div></div>
          <div class="mid">
            <div class="bts"><div class="bt st">${t("Start", 27)}</div><div class="bt">${t("Go", 16)}</div><div class="bt">${t("Hold", 27)}</div><div class="bt">${t("Continue", 51)}</div><div class="bt">${t("Force cut", 53)}</div></div>
            <div class="sg2"><b>${t("Status", 42)}</b>
              ${([["Waiting", 36], ["Etching", 35], ["Holding", 35], ["Cut point", 45], ["Overetch", 45], ["Finish", 27], ["Error", 23]] as [string, number][]).map(([s, w]) => html`<div class="sr">${t(s, w)}${led(s === "Error" ? "r" : "g")}</div>`)}
            </div>
          </div>
          <div class="dio">${t("DIO cmds are enabled", 106)}${led()}</div>
          <div class="vals">
            ${([["Time (sec)", 48, "2012.03", 65], ["Signal", 28, "15.24", 45], ["Rate (um/sec)", 67, "0.03", 35], ["Depth (um)", 53, "0.00", 35]] as [string, number, string, number][]).map(([a, w, v, vw]) => html`<div class="v">${t(a, w)}<div>${t(v, vw, "big")}</div></div>`)}
          </div>
        </aside>
      </div>
      <div class="task">
        <div class="ti"><svg width="16" height="16" viewBox="0 0 16 16"><path d="M0 2.300l6.500-.9v6.100H0zM7.500 1.200L16 0v7.500H7.500zM0 8.500h6.500v6.100L0 13.700zM7.500 8.500H16V16l-8.500-1.200z" fill="#fff"/></svg></div>
        <div class="ti"><svg width="17" height="17" viewBox="0 0 17 17"><circle cx="10.500" cy="6" r="5.200" fill="none" stroke="#fff" stroke-width="1.300"/><path d="M7 10l-6.500 6.500" stroke="#fff" stroke-width="1.500"/></svg></div>
        <div class="ti v3"><svg width="20" height="14" viewBox="0 0 20 14"><path d="M4.500 .5h11v13h-11zM3 2.500H.7v9H3M17 2.500h2.300v9H17" fill="none" stroke="#fff" stroke-width="1.200"/></svg></div>
        <div class="ti run"><svg width="24" height="24" viewBox="0 0 24 24"><path d="M1 0h20v21H1z" fill="#f2f2f2"/><circle cx="13" cy="9" r="7.500" fill="none" stroke="#aaa"/><path d="M7 14C5 8 10 1 17 1" stroke="#455" stroke-width="1.500" fill="none"/><text x="1" y="13" fill="#234" font-weight="bold" textLength="17" lengthAdjust="spacingAndGlyphs">uEye</text><path d="M12 17h8l3-2v8h-3v-1h-8z" fill="#999"/></svg></div>
        <div class="ti cur">${etch(24)}</div>
        <div class="ti"><svg width="22" height="20" viewBox="0 0 22 20"><path d="M0 1h8l2 2h11v15H0z" fill="#f7cf5c"/><path d="M0 5h22v13H0z" fill="#ffe08a"/><path d="M4 19v-9h14v9h-4v-5H8v5z" fill="#2fa8e8"/></svg></div>
        <div class="ti v3"><svg width="18" height="23" viewBox="0 0 18 23"><rect x=".5" y=".5" width="17" height="22" rx="1" fill="#4f8fc8" stroke="#9cc8ea"/><path d="M2 2h14v6H2z" fill="#d8ecfa"/><path d="M10 4h4v2h-4z" fill="#48a"/><path d="M2 11.500h14M2 15.500h14M2 19.500h9" stroke="#e4f2fc" stroke-width="2.400" stroke-dasharray="2.600 1.200"/><path d="M13 17h3v4h-3z" fill="#f6a830"/></svg></div>
        <div class="ti v3"><svg width="22" height="23" viewBox="0 0 22 23"><ellipse cx="9" cy="9" rx="9" ry="6" fill="#a33" transform="rotate(-20 9 9)"/><ellipse cx="9" cy="6.500" rx="8" ry="5.500" fill="#e9e9e9" transform="rotate(-20 9 6)"/><path d="M11 5l3 12M5 10l12 5" stroke="#999" stroke-width="1.800"/><circle cx="18" cy="16" r="2.500" fill="none" stroke="#28c" stroke-width="2"/><circle cx="13" cy="20" r="2" fill="none" stroke="#28c" stroke-width="2"/></svg></div>
        <div class="ti"><svg width="24" height="24" viewBox="0 0 24 24"><path d="M20.500 15.500A8.500 8.500 0 1 1 21 12H9" fill="none" stroke="#35b4f0" stroke-width="4"/><path d="M3 22c-3-2 0-9 6-14C15 2 21 0 22 2s-.5 4-1 5" fill="none" stroke="#f8c830" stroke-width="2"/></svg></div>
        <div class="ti run"><svg width="24" height="24" viewBox="0 0 24 24"><path d="M1 16c-2-8 6-13 14-11 8 2 7 8 4 12-3 5-9 6-12 4 1-4-4-1-6-5z" fill="#d5e4f0"/><circle cx="6" cy="11" r="2" fill="#e44"/><circle cx="11" cy="8" r="2" fill="#4a4"/><circle cx="5.500" cy="15.500" r="1.800" fill="#39f"/><circle cx="16" cy="9" r="2" fill="#fb2"/><path d="M13 21L20 5" stroke="#e0902a" stroke-width="2.500"/><path d="M18 1l5 1-1 4-4-1z" fill="#c8a070"/></svg></div>
        <div class="tray">
          <svg class="up" width="12" height="8" viewBox="0 0 12 8"><path d="M1 7l5-5 5 5" fill="none" stroke="#fff" stroke-width="1.300"/></svg>
          <svg width="17" height="15" viewBox="0 0 17 15"><path class="cr" d="M5.500 1.500h10v8h-12V5M.5 1.500h4v3h-4zM2.500 5v8M9.500 10v3M6 13.500h7" fill="none" stroke="#fff"/></svg>
          <svg width="17" height="14" viewBox="0 0 17 14"><path d="M.5 4.500h2.500L6.500 1v12L3 9.500H.5zM9 5c1 1 1 3 0 4M11.500 3c2 2.500 2 5.500 0 8M14 1c3 4 3 8 0 12" fill="none" stroke="#fff"/></svg>
          <svg width="16" height="17" viewBox="0 0 16 17"><path d="M0 0h16v13h-5l-3 3-3-3H0z" fill="#fff"/><path d="M3 3.500h10M3 6.500h10M3 9.500h6" stroke="#1f1f1f"/></svg>
          <div class="clk">${t("16:02", 27, "seg")}${t("24/01/2023", 58, "seg")}</div>
          <i class="edge"></i>
        </div>
      </div>
    </div>`;
  }
}
